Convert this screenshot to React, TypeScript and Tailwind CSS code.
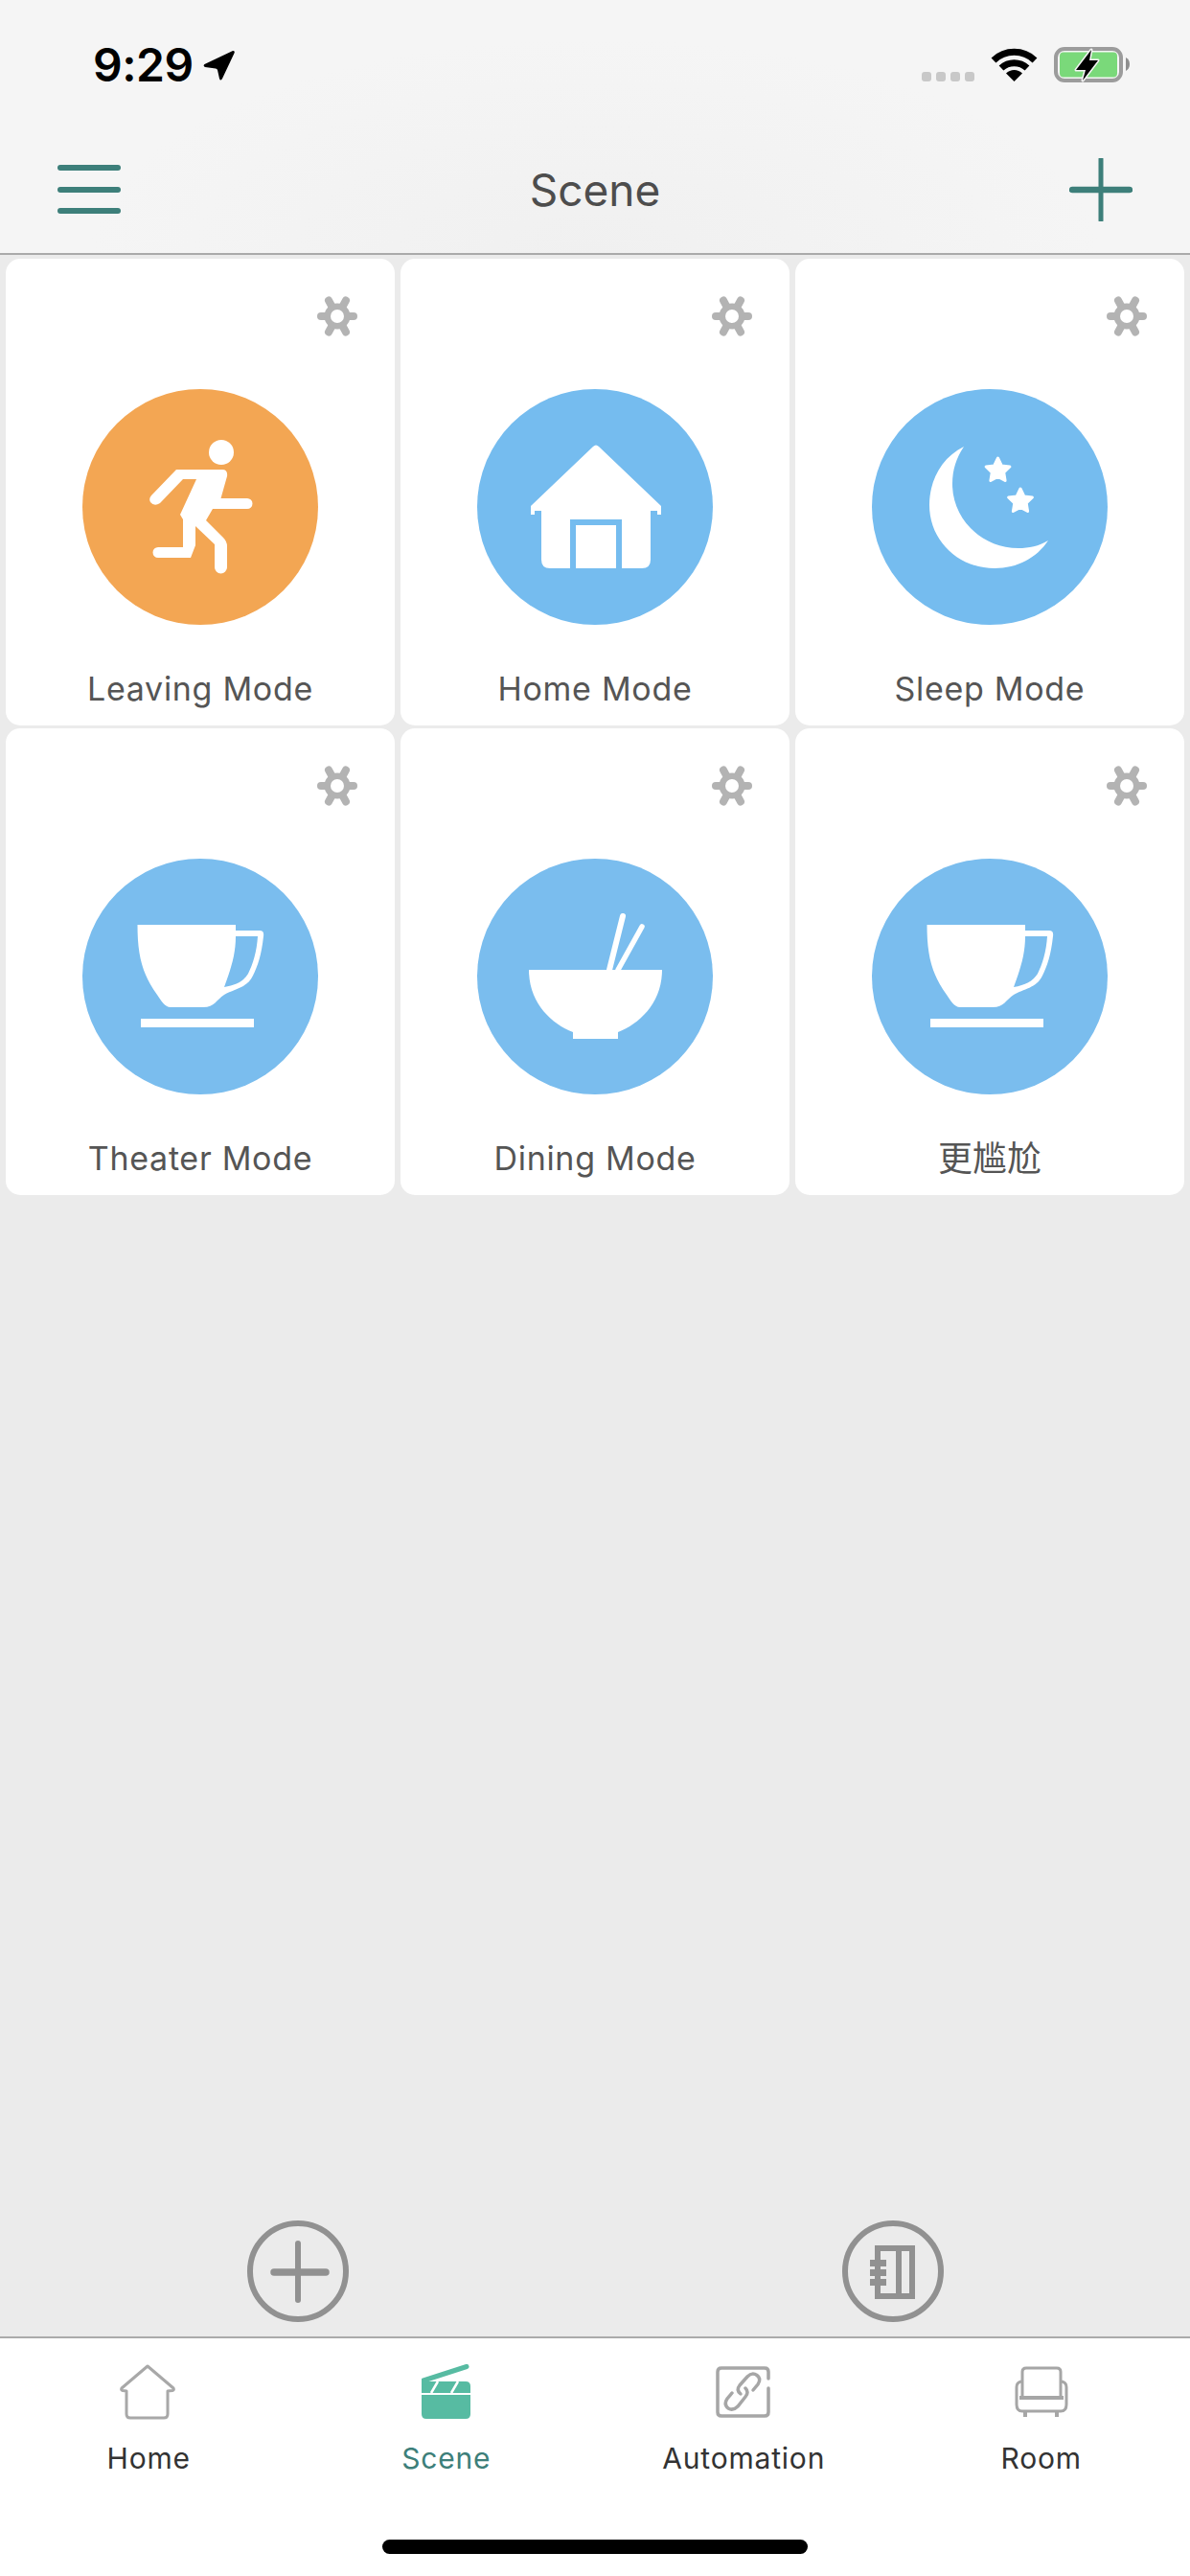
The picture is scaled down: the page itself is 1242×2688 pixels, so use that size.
import type { ReactNode } from "react";

const FONT = "font-['Inter','Noto_Sans_CJK_SC',sans-serif]";

function StatusBar() {
  return (
    <div className="flex h-[132px] items-start justify-between pl-[97px] pr-[62px] pt-[49px]">
      <div className="flex items-start gap-[10px]">
        <span className="text-[48px] font-semibold leading-[38px] tracking-[-0.5px] text-black">9:29</span>
        <svg width="34" height="34" viewBox="0 0 34 34" className="mt-[3px]">
          <path d="M31 1 Q33.5 1 32.5 3.5 L20 30 Q18 33 17 30 L15 21 Q14.5 19.5 13 19.5 L2 18 Q-0.5 17 1.5 15Z" fill="#000" />
        </svg>
      </div>
      <div className="flex items-start">
        <div className="mr-[17px] mt-[26px] flex gap-[5px]">
          <span className="h-[10px] w-[10px] rounded-[3px] bg-[#c8c8c8]" />
          <span className="h-[10px] w-[10px] rounded-[3px] bg-[#c8c8c8]" />
          <span className="h-[10px] w-[10px] rounded-[3px] bg-[#c8c8c8]" />
          <span className="h-[10px] w-[10px] rounded-[3px] bg-[#c8c8c8]" />
        </div>
        <svg width="49" height="37" viewBox="0 0 49 37" className="mr-[17px]">
          <path d="M3 14 A31 31 0 0 1 46 14" fill="none" stroke="#000" strokeWidth="7" />
          <path d="M11 22 A20 20 0 0 1 38 22" fill="none" stroke="#000" strokeWidth="7" />
          <path d="M24.5 36 L16 27.5 A12 12 0 0 1 33 27.5Z" fill="#000" />
        </svg>
        <svg width="80" height="38" viewBox="0 0 80 38">
          <rect x="2" y="2" width="68" height="33" rx="9" fill="none" stroke="#9c9c9c" strokeWidth="4" />
          <rect x="6" y="5.5" width="60" height="26" rx="4" fill="#7ad97a" />
          <path d="M75 11 Q79 13 79 18 Q79 23 75 25Z" fill="#8e8e8e" />
          <polygon points="39,3 23,24 33,24 30,35 46,14 37,14" fill="#000" stroke="#f5f5f5" strokeWidth="3" strokeLinejoin="round" />
          <polygon points="39,3 23,24 33,24 30,35 46,14 37,14" fill="#000" />
        </svg>
      </div>
    </div>
  );
}

function NavBar() {
  return (
    <div className="flex h-[134px] items-start justify-between border-b-2 border-[#aaaaaa] pl-[60px] pr-[60px]">
      <button type="button" className="mt-[40px] flex w-[66px] flex-col gap-[16.5px]">
        <span className="h-[6px] rounded-[3px] bg-[#3d7f7a]" />
        <span className="h-[6px] rounded-[3px] bg-[#3d7f7a]" />
        <span className="h-[6px] rounded-[3px] bg-[#3d7f7a]" />
      </button>
      <h1 className="mt-[38px] text-[46px] font-normal leading-[56px] text-[#4d4d4d]">Scene</h1>
      <button type="button" className="mt-[33px]">
        <svg width="66" height="66" viewBox="0 0 66 66">
          <path d="M33 1 V65" stroke="#3d7f7a" strokeWidth="5" strokeLinecap="round" />
          <path d="M3 33 H63" stroke="#3d7f7a" strokeWidth="6.5" strokeLinecap="round" />
        </svg>
      </button>
    </div>
  );
}

function Gear() {
  return (
    <svg width="42" height="42" viewBox="0 0 42 42">
      <g stroke="#b3b3b3" strokeWidth="8" strokeLinecap="round">
        <path d="M4 21 H38" />
        <path d="M12 4.5 L30 37.5" />
        <path d="M30 4.5 L12 37.5" />
      </g>
      <circle cx="21" cy="21" r="13.5" fill="#b3b3b3" />
      <circle cx="21" cy="21" r="7" fill="#fff" />
    </svg>
  );
}

function RunnerIcon() {
  return (
    <>
      <ellipse cx="145" cy="66" rx="13" ry="13" fill="#fff" />
      <path
        d="M98 84 H146 Q152 84 151 91 L144.5 114 H172 a5.5 5.5 0 0 1 0 11 H136 L129 137 L147 155 Q151 159 151 164 V186 a6.5 6.5 0 0 1 -13 0 V162 L118 143 V163 L113 176 H79 a5.5 5.5 0 0 1 0 -11 H105 V136 L102 131 L119 94 H105 L81 119 Q75 123 71 118 Q69 114 72 111Z"
        fill="#fff"
      />
    </>
  );
}

function HouseIcon({ fill }: { fill: string }) {
  return (
    <>
      <path
        d="M121 60 Q124 57 127 60 L192 122 V131 H188 V127 H181 V178 Q181 187 172 187 H76 Q67 187 67 178 V127 H60 V131 H56 V122Z"
        fill="#fff"
      />
      <path d="M97 187 V136 H151 V187 H145 V142 H103 V187Z" fill={fill} />
    </>
  );
}

const STAR = "M0 -13 L3.8 -5 L12.4 -4 L6.2 2 L7.6 10.5 L0 6.5 L-7.6 10.5 L-6.2 2 L-12.4 -4 L-3.8 -5Z";

function MoonIcon() {
  return (
    <>
      <path
        d="M96 60 C72 72 60 96 60 121 C60 158 90 187 128 187 C152 187 172 176 184 158 C174 164 164 166 153 166 C114 166 84 135 84 99 C84 84 88 72 96 60Z"
        fill="#fff"
      />
      <path d={STAR} transform="translate(131.5 85)" fill="#fff" stroke="#fff" strokeWidth="3" strokeLinejoin="round" />
      <path d={STAR} transform="translate(155 117)" fill="#fff" stroke="#fff" strokeWidth="3" strokeLinejoin="round" />
    </>
  );
}

function CupIcon() {
  return (
    <>
      <path
        fillRule="evenodd"
        d="M57.5 69 H160 V75 H185 Q190 75 189 81 C187 100 183 112 178 122 C172 135 158 136 148 142 C140 147 138 155 126 155 H92 C86 155 82 148 78 142 C62 120 57.5 100 57.5 69Z M160 81 H183 C182 97 178 110 173 120 C168 128 160 132 148 134 C155 115 160 100 160 81Z"
        fill="#fff"
      />
      <rect x="61" y="167" width="118" height="9" fill="#fff" />
    </>
  );
}

function BowlIcon() {
  return (
    <>
      <path d="M152 60 L138 116" stroke="#fff" strokeWidth="6" strokeLinecap="round" />
      <path d="M172 71 L147 116" stroke="#fff" strokeWidth="5.5" strokeLinecap="round" />
      <path d="M54 116 H193 C193 150 170 172 147 181 V188 H100 V181 C77 172 54 150 54 116Z" fill="#fff" />
    </>
  );
}

interface SceneCardProps {
  label: string;
  color: string;
  icon: ReactNode;
  labelClass?: string;
}

function SceneCard({ label, color, icon, labelClass = "text-[34px] tracking-[0.7px]" }: SceneCardProps) {
  return (
    <div className="relative flex h-[487px] flex-col items-center rounded-[15px] bg-white">
      <button type="button" className="absolute right-[39px] top-[39px]">
        <Gear />
      </button>
      <svg width="246" height="246" viewBox="0 0 246 246" className="mt-[136px]">
        <circle cx="123" cy="123" r="123" fill={color} />
        {icon}
      </svg>
      <p className={`mt-[45px] leading-[44px] text-[#555555] ${labelClass}`}>{label}</p>
    </div>
  );
}

function ActionCircle({ children }: { children: ReactNode }) {
  return (
    <svg width="106" height="106" viewBox="0 0 106 106">
      <circle cx="53" cy="53" r="50" fill="none" stroke="#919191" strokeWidth="6" />
      {children}
    </svg>
  );
}

function TabHome() {
  return (
    <svg width="60" height="58" viewBox="0 0 60 58">
      <path
        d="M29 2 L2 25 Q1 27 3 27.5 L7 28 V52 Q7 56 11 56 H46 Q50 56 50 52 V28 L55 27.5 Q57 27 56 25Z"
        fill="none"
        stroke="#a8a8a8"
        strokeWidth="3"
        strokeLinejoin="round"
      />
    </svg>
  );
}

function TabScene() {
  return (
    <svg width="52" height="58" viewBox="0 0 52 58">
      <path d="M2 17 L47 2.5" stroke="#57bba2" strokeWidth="5" strokeLinecap="round" />
      <path d="M0 18 H46 Q51 18 51 23 V30 H0Z" fill="#57bba2" />
      <path d="M17 18 L10 30 M38 18 L31 30" stroke="#fff" strokeWidth="2.5" />
      <path d="M0 32 H51 V52 Q51 57 46 57 H5 Q0 57 0 52Z" fill="#57bba2" />
    </svg>
  );
}

function TabAutomation() {
  return (
    <svg width="58" height="54" viewBox="0 0 58 54">
      <path
        d="M55 13 V6 Q55 2 51 2 H6 Q2 2 2 6 V48 Q2 52 6 52 H51 Q55 52 55 48 V23"
        fill="none"
        stroke="#a6a6a6"
        strokeWidth="3.5"
        strokeLinecap="round"
      />
      <g fill="none" stroke="#a6a6a6" strokeWidth="3.5" strokeLinecap="round">
        <path d="M39 25 L44 19 Q48 13 43 9.5 Q38 6 33 11 L25 20 Q21 25 26 29" />
        <path d="M31 23 Q35 27 31 32 L23 42 Q18 47 13 44 Q8 40 12 34 L17 28" />
      </g>
    </svg>
  );
}

function TabRoom() {
  return (
    <svg width="56" height="54" viewBox="0 0 56 54">
      <g fill="none" stroke="#a6a6a6" strokeWidth="3">
        <path d="M8 33 V6 Q8 2 12 2 H44 Q48 2 48 6 V33" />
        <path d="M7 16 Q2 17 2 22 V40 Q2 47 8 47 H48 Q54 47 54 40 V22 Q54 17 49 16" />
      </g>
      <path d="M5 33 H51 M11 47 V53 M44 47 V53" fill="none" stroke="#a6a6a6" strokeWidth="4" />
    </svg>
  );
}

const tabs = [
  { label: "Home", icon: <TabHome />, active: false },
  { label: "Scene", icon: <TabScene />, active: true },
  { label: "Automation", icon: <TabAutomation />, active: false },
  { label: "Room", icon: <TabRoom />, active: false },
];

export default function App() {
  return (
    <div className={`flex h-[2688px] w-[1242px] flex-col bg-[#ebebeb] ${FONT}`}>
      <header className="bg-[radial-gradient(ellipse_at_50%_100%,#f0f0f0_0%,#f5f5f5_60%)]">
        <StatusBar />
        <NavBar />
      </header>

      <main className="flex-1 px-[6px] pt-[4px]">
        <div className="grid grid-cols-3 gap-x-[6px] gap-y-[3px]">
          <SceneCard label="Leaving Mode" color="#f3a653" icon={<RunnerIcon />} />
          <SceneCard label="Home Mode" color="#75bcef" icon={<HouseIcon fill="#75bcef" />} />
          <SceneCard label="Sleep Mode" color="#75bcef" icon={<MoonIcon />} />
          <SceneCard label="Theater Mode" color="#7abdee" icon={<CupIcon />} />
          <SceneCard label="Dining Mode" color="#7abdee" icon={<BowlIcon />} />
          <SceneCard label="更尴尬" color="#7abdee" icon={<CupIcon />} labelClass="text-[36px]" />
        </div>
      </main>

      <div className="grid grid-cols-2 justify-items-center pb-[15px]">
        <button type="button">
          <ActionCircle>
            <path d="M53 24 V83" stroke="#919191" strokeWidth="6" strokeLinecap="round" />
            <path d="M28 54 H82" stroke="#919191" strokeWidth="7.5" strokeLinecap="round" />
          </ActionCircle>
        </button>
        <button type="button">
          <ActionCircle>
            <path d="M37 29 H73 V79 H37Z M59 29 V79" fill="none" stroke="#919191" strokeWidth="6" />
            <path d="M29 41 H46 V48 H29Z M29 51 H46 V58 H29Z M29 61 H46 V68 H29Z" fill="#919191" />
          </ActionCircle>
        </button>
      </div>

      <nav className="h-[250px] border-t-2 border-[#aaaaaa] bg-white">
        <div className="grid grid-cols-4 pt-[27px]">
          {tabs.map((tab) => (
            <button key={tab.label} type="button" className="flex flex-col items-center">
              <span className="flex h-[58px] items-center">{tab.icon}</span>
              <span
                className={`mt-[22px] text-[30px] leading-[36px] tracking-[0.8px] ${tab.active ? "text-[#3d7f7a]" : "text-[#333333]"}`}
              >
                {tab.label}
              </span>
            </button>
          ))}
        </div>
        <div className="mx-auto mt-[67px] h-[15px] w-[444px] rounded-full bg-black" />
      </nav>
    </div>
  );
}
